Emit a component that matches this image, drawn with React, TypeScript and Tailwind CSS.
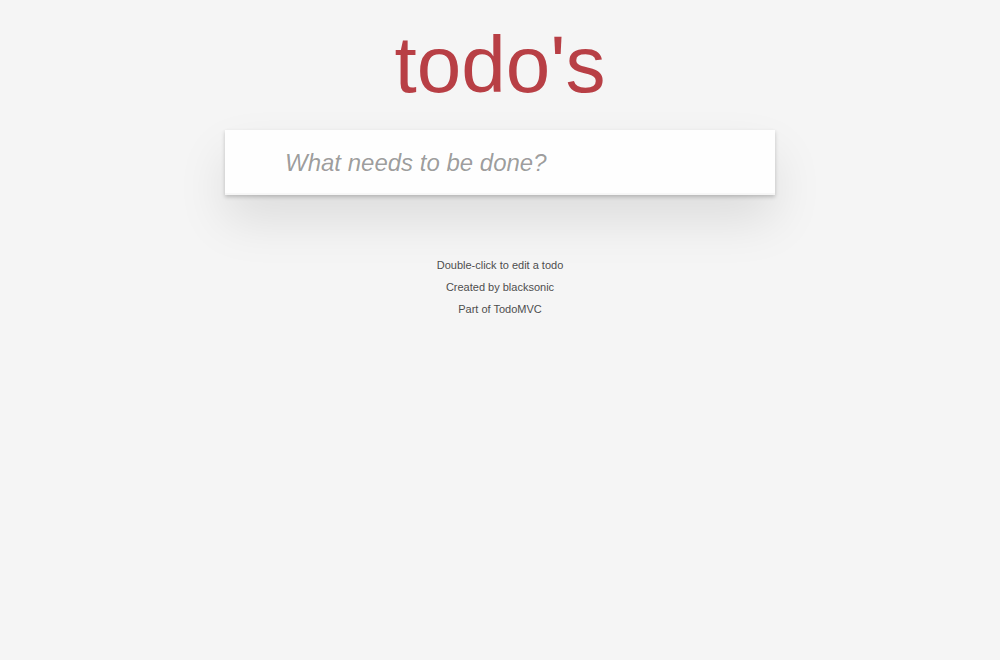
import React from "react";

export default function App() {
  return (
    <div
      className="min-h-[660px] w-full bg-[#f5f5f5] text-[14px] text-[#111111]"
      style={{ fontFamily: '"Liberation Sans", Arial, Helvetica, sans-serif' }}
    >
      <div className="mx-auto flex w-[550px] flex-col pt-[25px]">
        <h1 className="text-center text-[80px] font-extralight leading-[80px] text-[#b83f45]">
          todo's
        </h1>
        <section className="mt-[25px] bg-white shadow-[0_2px_4px_0_rgba(0,0,0,0.2),0_25px_50px_0_rgba(0,0,0,0.1)]">
          <input
            className="block h-[65px] w-full border-none bg-[rgba(0,0,0,0.003)] pl-[60px] pr-4 text-[24px] leading-[1.4em] text-[#111111] shadow-[inset_0_-2px_1px_rgba(0,0,0,0.03)] outline-none placeholder:italic placeholder:text-[rgba(0,0,0,0.4)]"
            placeholder="What needs to be done?"
          />
        </section>
        <footer className="mt-[65px] flex flex-col items-center gap-[11px] text-center text-[11px] leading-none text-[#4d4d4d] [text-shadow:0_1px_0_rgba(255,255,255,0.5)]">
          <p>Double-click to edit a todo</p>
          <p>
            Created by <a className="text-inherit no-underline">blacksonic</a>
          </p>
          <p>
            Part of <a className="text-inherit no-underline">TodoMVC</a>
          </p>
        </footer>
      </div>
    </div>
  );
}
